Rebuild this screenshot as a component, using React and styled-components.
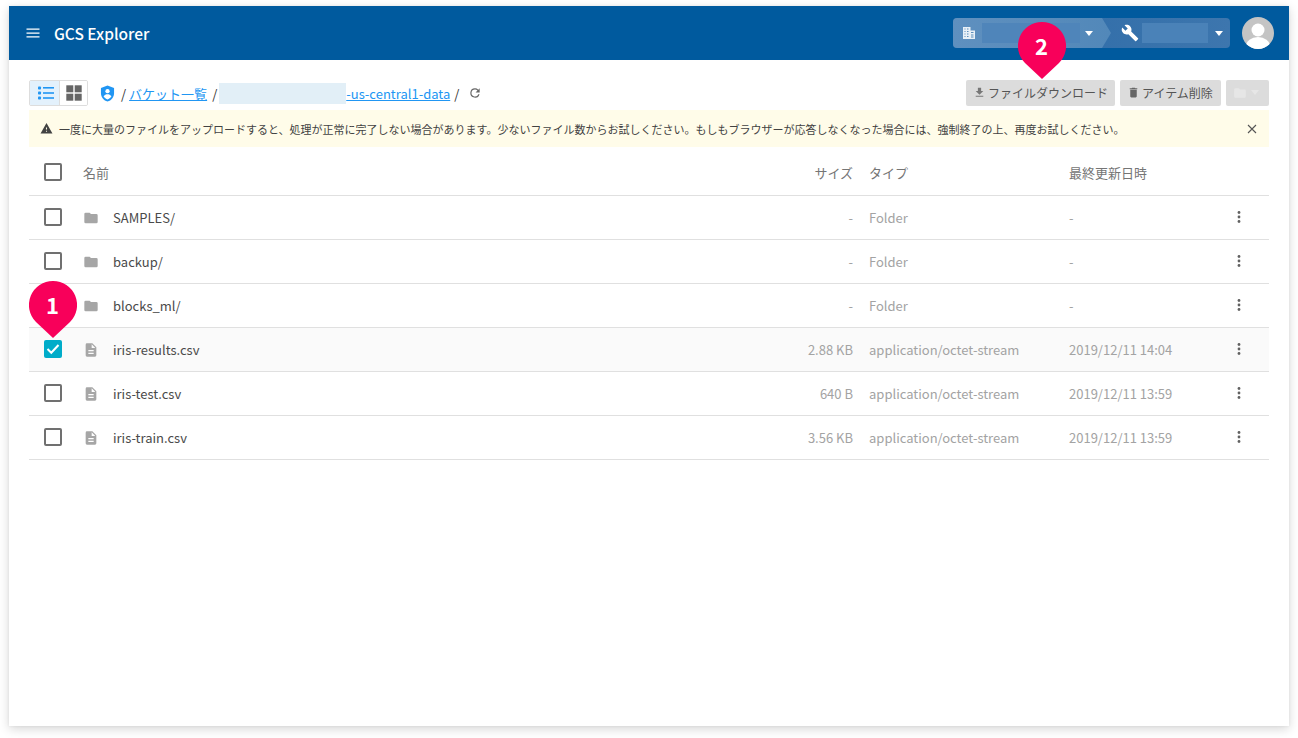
import React from 'react';
import styled, { createGlobalStyle } from 'styled-components';

const Global = createGlobalStyle`
  html, body { margin: 0; padding: 0; background: #fff; }
  body { font-family: "Noto Sans CJK JP", "Noto Sans", sans-serif; color: #424242; }
  * { box-sizing: border-box; }
`;
const Page = styled.div`width: 1298px; height: 738px; padding: 6px 9px 12px; overflow: hidden;`;
const Card = styled.div`
  position: relative; width: 1280px; height: 720px; background: #fff;
  box-shadow: 0 3px 10px rgba(0,0,0,.16), 0 0 3px rgba(0,0,0,.06);
`;
const Header = styled.header`
  height: 54px; background: #005a9e; color: #fff; display: flex; align-items: center; padding: 0 15px 0 16px;
`;
const Title = styled.div`font-size: 15.5px; font-weight: 500; margin-left: 13px;`;
const Spacer = styled.div`flex: 1;`;
const Crumbs = styled.div`display: flex; height: 30px; margin-right: 12px; border-radius: 4px; overflow: hidden; background: linear-gradient(90deg, #2a69a6, #3d76ae);`;
const OrgCrumb = styled.div`
  width: 158px; padding-left: 9px; display: flex; align-items: center; background: linear-gradient(90deg, #5f90bf, #5288b9);
  clip-path: polygon(0 0, 149px 0, 158px 15px, 149px 30px, 0 30px);
`;
const ProjCrumb = styled.div`width: 119px; padding-left: 10px; display: flex; align-items: center;`;
const Blur = styled.div`height: ${p => p.$h}px; width: ${p => p.$w}px; margin-left: ${p => p.$ml}px; background: ${p => p.$c};`;
const Caret = styled.span`
  width: 0; height: 0; border-left: 4.5px solid transparent; border-right: 4.5px solid transparent;
  border-top: 5px solid ${p => p.$c ?? '#fff'}; margin-left: ${p => p.$ml}px;
`;
const Avatar = styled.div`width: 32px; height: 32px; border-radius: 50%; background: #c4c4c4; overflow: hidden; display: flex;`;
const Content = styled.div`padding: 20px 20px 0;`;
const Toolbar = styled.div`display: flex; align-items: center; height: 26px;`;
const Toggle = styled.div`display: flex; width: 59px; height: 26px; border: 1px solid #ddd; border-radius: 2px; overflow: hidden;`;
const ToggleItem = styled.div`
  flex: 1; display: flex; align-items: center; justify-content: center;
  background: ${p => p.$on ? '#e3f1fc' : '#fff'};
  padding-left: ${p => p.$on ? 2 : 0}px;
  & + & { border-left: 1px solid #ddd; }
`;
const Path = styled.div`display: flex; align-items: center; margin-left: 12px; font-size: 13px; color: #333;`;
const Sep = styled.span`margin: 0 ${p => p.$r ?? 5}px 0 ${p => p.$l ?? 5}px; font-size: 13px;`;
const Crumb = styled.a`color: #2196f3; text-decoration: underline; font-size: 13px;`;
const Masked = styled.span`display: inline-block; width: 127px; height: 21px; background: #e2eff7;`;
const Actions = styled.div`display: flex; gap: 5px; align-items: center;`;
const ActionButton = styled.button`
  height: 26px; width: ${p => p.$w}px; padding: 0 0 1px ${p => p.$pl ?? 7}px; border: 0; border-radius: 2px; background: #dcdcdc;
  color: #555; font: inherit; font-size: 12px; display: flex; align-items: center; gap: 2px; white-space: nowrap;
`;
const Alert = styled.div`
  margin-top: 4px; height: 37px; background: #fffce9; display: flex; align-items: center; padding: 0 11px; font-size: 11px; color: #424242;
`;
const AlertText = styled.span`margin-left: 6px;`;
const Row = styled.div`
  display: grid; grid-template-columns: 54px 700px 70px 16px 200px 150px 50px; align-items: center;
  height: ${p => p.$head ? 49 : 44}px; padding-top: ${p => p.$head ? 2 : 0}px; border-bottom: 1px solid #e0e0e0; font-size: 13px;
  background: ${p => p.$sel ? '#fafafa' : '#fff'};
`;
const CheckCell = styled.div`padding-left: 15px; display: flex; margin-top: ${p => p.$head ? 0 : -1}px;`;
const Check = styled.span`
  width: 18px; height: 18px; border-radius: 2px; display: flex; align-items: center; justify-content: center;
  border: ${p => p.$on ? 'none' : '2px solid #707070'}; background: ${p => p.$on ? '#00acc9' : '#fff'};
`;
const NameCell = styled.div`display: flex; align-items: center; color: #4a4a4a;`;
const HeadName = styled.div`color: #757575; font-size: 13px;`;
const FileName = styled.span`margin-left: 14px;`;
const IconSlot = styled.span`width: 16px; display: flex; justify-content: center;`;
const Size = styled.div`text-align: right; color: ${p => p.$head ? '#757575' : '#a3a3a3'}; font-size: 13px;`;
const Muted = styled.div`grid-column: ${p => p.$col}; color: ${p => p.$head ? '#757575' : '#a3a3a3'}; font-size: 13px;`;
const Kebab = styled.div`display: flex; padding-left: 10px; margin-top: -2px;`;
const Pin = styled.div`
  position: absolute; left: ${p => p.$x}px; top: ${p => p.$y}px; width: 48px; height: 57px;
`;
const PinLabel = styled.span`
  position: absolute; left: -1px; right: 0; top: 7px; text-align: center; color: #fff; font-size: 22px; line-height: 32px; font-weight: 700;
`;

const MenuIcon = () => <svg width="16" height="16" viewBox="0 0 16 16"><path d="M1.500 3.500h13v1.300h-13zM1.500 7.400h13v1.300h-13zM1.500 11.200h13v1.300h-13z" fill="#fff"/></svg>;
const Building = () => <svg width="14" height="14" viewBox="0 0 14 14"><path d="M1 1h7.500v3.500H13V13H1z" fill="#e8f0f7"/><path d="M2.500 3h1M5 3h1.500M2.500 5.500h1M5 5.500h1.500M2.500 8h1M5 8h1.500M2.500 10.500h1M5 10.500h1.500M9 6.500h2.500M9 9h2.500M9 11h2.500" stroke="#5b8dbb" strokeWidth="1.100"/></svg>;
const Wrench = () => <svg width="18" height="18" viewBox="0 0 24 24"><path fill="#fff" d="M22.700 19l-9.100-9.100c.9-2.300.4-5-1.500-6.900-2-2-5-2.400-7.400-1.300L9 6 6 9 1.600 4.700C.4 7.100.9 10.100 2.900 12.100c1.900 1.900 4.600 2.400 6.900 1.500l9.100 9.100c.4.4 1 .4 1.400 0l2.300-2.300c.5-.4.500-1.100.1-1.400z"/></svg>;
const ListIcon = () => <svg width="16" height="14" viewBox="0 0 16 14" fill="#2196f3"><rect x="0" y="0.500" width="3" height="3" rx=".8"/><rect x="0" y="5.500" width="3" height="3" rx=".8"/><rect x="0" y="10.500" width="3" height="3" rx=".8"/><rect x="5" y="1" width="11" height="1.600"/><rect x="5" y="6.200" width="11" height="1.600"/><rect x="5" y="11.200" width="11" height="1.600"/></svg>;
const GridIcon = () => <svg width="16" height="16" viewBox="0 0 16 16" fill="#666"><rect width="7" height="7" x=".3" y=".3"/><rect width="7" height="7" x="8.700" y=".3"/><rect width="7" height="7" x=".3" y="8.700"/><rect width="7" height="7" x="8.700" y="8.700"/></svg>;
const Shield = () => <svg width="15" height="17" viewBox="0 0 16 18"><path d="M8 .5L1 3v5.500C1 13 4 16.600 8 17.600c4-1 7-4.600 7-9.100V3z" fill="#2196f3"/><circle cx="8" cy="6.500" r="2.300" fill="#fff"/><path d="M3.800 12c1-1.700 2.500-2.300 4.200-2.300s3.200.6 4.200 2.300C11 13.800 9.600 14.800 8 15.300 6.400 14.800 5 13.800 3.800 12z" fill="#fff"/></svg>;
const Refresh = () => <svg width="14" height="14" viewBox="0 0 24 24"><path fill="#666" d="M17.650 6.350A7.960 7.960 0 0 0 12 4a8 8 0 1 0 7.730 10h-2.080A6 6 0 1 1 12 6c1.660 0 3.140.69 4.220 1.780L13 11h7V4z"/></svg>;
const Download = () => <svg width="13" height="13" viewBox="0 0 24 24"><path fill="#777" d="M19 9h-4V3H9v6H5l7 7zM5 18v2h14v-2z"/></svg>;
const Trash = () => <svg width="13" height="15" viewBox="0 0 24 24"><path fill="#666" d="M6 19c0 1.100.9 2 2 2h8c1.100 0 2-.9 2-2V7H6zM19 4h-3.500l-1-1h-5l-1 1H5v2h14z"/></svg>;
const FolderGhost = () => <svg width="14" height="14" viewBox="0 0 24 24"><path fill="#e6e6e6" d="M10 4H4a2 2 0 0 0-2 2v12a2 2 0 0 0 2 2h16a2 2 0 0 0 2-2V8a2 2 0 0 0-2-2h-8z"/></svg>;
const Warn = () => <svg width="13" height="13" viewBox="0 0 24 24"><path fill="#424242" d="M1 21h22L12 2zm12-3h-2v-2h2zm0-4h-2v-4h2z"/></svg>;
const Close = () => <svg width="12" height="12" viewBox="0 0 12 12"><path d="M2 2l8 8M10 2l-8 8" stroke="#555" strokeWidth="1.100"/></svg>;
const Folder = () => <svg width="18" height="18" viewBox="0 0 24 24"><path fill="#a6a6a6" d="M10 4H4a2 2 0 0 0-2 2v12a2 2 0 0 0 2 2h16a2 2 0 0 0 2-2V8a2 2 0 0 0-2-2h-8z"/></svg>;
const FileIcon = () => <svg width="18" height="18" viewBox="0 0 24 24"><path fill="#a6a6a6" d="M14 2H6a2 2 0 0 0-2 2v16a2 2 0 0 0 2 2h12a2 2 0 0 0 2-2V8zm2 16H8v-2h8zm0-4H8v-2h8zm-3-5V3.500L18.500 9z"/></svg>;
const Dots = () => <svg width="20" height="20" viewBox="0 0 20 20" fill="#616161"><circle cx="10" cy="5.500" r="1.400"/><circle cx="10" cy="10" r="1.400"/><circle cx="10" cy="14.500" r="1.400"/></svg>;
const Tick = () => <svg width="14" height="12" viewBox="0 0 14 12"><path d="M1.500 6l3.800 3.800L12.500 2" fill="none" stroke="#fff" strokeWidth="2"/></svg>;
const PinShape = () => <svg width="48" height="57" viewBox="0 0 48 57"><path d="M24 0a24 24 0 0 1 17 41L24 57 7 41A24 24 0 0 1 24 0z" fill="#f8005a"/></svg>;
const AvatarArt = () => <svg width="32" height="32" viewBox="0 0 32 32"><circle cx="16" cy="13" r="6.500" fill="#fff"/><ellipse cx="16" cy="29" rx="12" ry="9" fill="#fff"/></svg>;

const rows = [
  { n: 'SAMPLES/', s: '-', t: 'Folder', d: '-' },
  { n: 'backup/', s: '-', t: 'Folder', d: '-' },
  { n: 'blocks_ml/', s: '-', t: 'Folder', d: '-' },
  { n: 'iris-results.csv', s: '2.88 KB', t: 'application/octet-stream', d: '2019/12/11 14:04', sel: true },
  { n: 'iris-test.csv', s: '640 B', t: 'application/octet-stream', d: '2019/12/11 13:59' },
  { n: 'iris-train.csv', s: '3.56 KB', t: 'application/octet-stream', d: '2019/12/11 13:59' },
];

export default function App() {
  return (
    <Page>
      <Global />
      <Card>
        <Header>
          <MenuIcon />
          <Title>GCS Explorer</Title>
          <Spacer />
          <Crumbs>
            <OrgCrumb>
              <Building />
              <Blur $w={98} $h={20} $ml={6} $c="#4f85ba" />
              <Caret $ml={5} />
            </OrgCrumb>
            <ProjCrumb>
              <Wrench />
              <Blur $w={66} $h={20} $ml={3} $c="#4a82b8" />
              <Caret $ml={7} />
            </ProjCrumb>
          </Crumbs>
          <Avatar><AvatarArt /></Avatar>
        </Header>
        <Content>
          <Toolbar>
            <Toggle>
              <ToggleItem $on><ListIcon /></ToggleItem>
              <ToggleItem><GridIcon /></ToggleItem>
            </Toggle>
            <Path>
              <Shield />
              <Sep $l={6} $r={3}>/</Sep>
              <Crumb>バケット一覧</Crumb>
              <Sep $r={2}>/</Sep>
              <Masked />
              <Crumb>-us-central1-data</Crumb>
              <Sep $l={4} $r={9}>/</Sep>
              <Refresh />
            </Path>
            <Spacer />
            <Actions>
              <ActionButton $w={149}><Download />ファイルダウンロード</ActionButton>
              <ActionButton $w={101}><Trash />アイテム削除</ActionButton>
              <ActionButton $w={43}><FolderGhost /><Caret $ml={2} $c="#e6e6e6" /></ActionButton>
            </Actions>
          </Toolbar>
          <Alert>
            <Warn />
            <AlertText>一度に大量のファイルをアップロードすると、処理が正常に完了しない場合があります。少ないファイル数からお試しください。もしもブラウザーが応答しなくなった場合には、強制終了の上、再度お試しください。</AlertText>
            <Spacer />
            <Close />
          </Alert>
          <Row $head>
            <CheckCell $head><Check /></CheckCell>
            <HeadName>名前</HeadName>
            <Size $head>サイズ</Size>
            <Muted $head $col={5}>タイプ</Muted>
            <Muted $head $col={6}>最終更新日時</Muted>
          </Row>
          {rows.map(r => (
            <Row key={r.n} $sel={r.sel}>
              <CheckCell><Check $on={r.sel}>{r.sel && <Tick />}</Check></CheckCell>
              <NameCell>
                <IconSlot>{r.t === 'Folder' ? <Folder /> : <FileIcon />}</IconSlot>
                <FileName>{r.n}</FileName>
              </NameCell>
              <Size>{r.s}</Size>
              <Muted $col={5}>{r.t}</Muted>
              <Muted $col={6}>{r.d}</Muted>
              <Kebab><Dots /></Kebab>
            </Row>
          ))}
        </Content>
        <Pin $x={20} $y={275}><PinShape /><PinLabel>1</PinLabel></Pin>
        <Pin $x={1009} $y={16}><PinShape /><PinLabel>2</PinLabel></Pin>
      </Card>
    </Page>
  );
}
